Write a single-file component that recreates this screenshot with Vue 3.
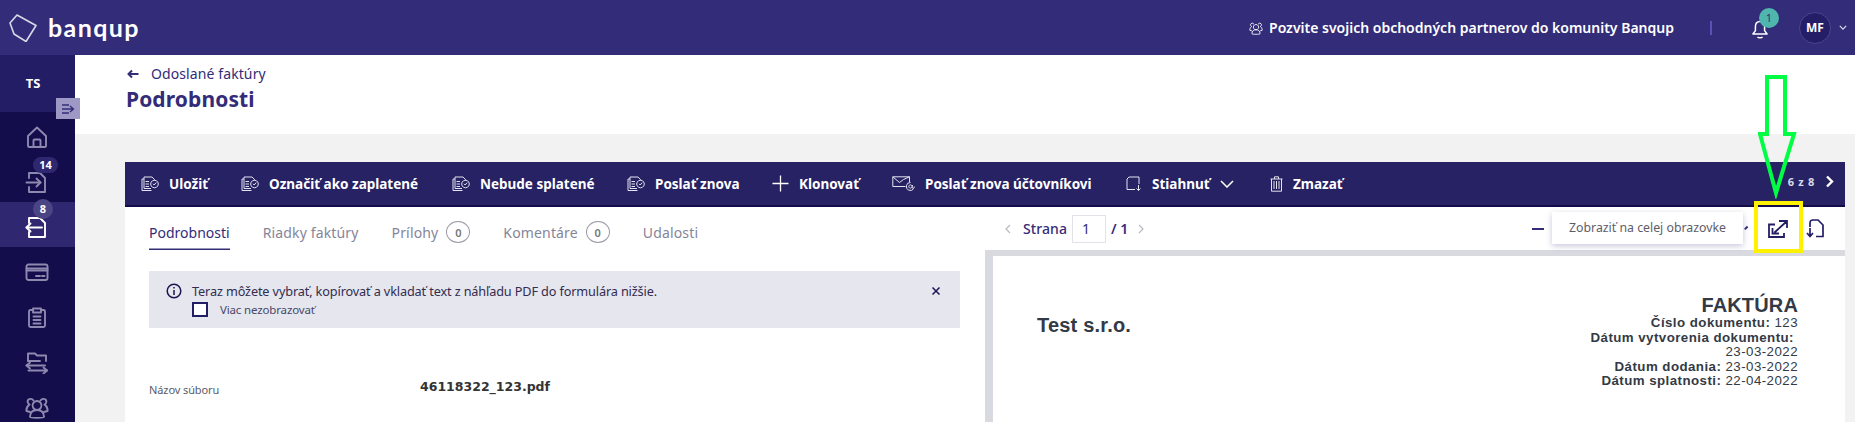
<script setup>
const docCheck = [
  'M3 3V1H11L13.5 3.5V4.5',
  'M1 3H3V12.5H10',
  'M1 3V14.5H10.5',
  'M4.5 5.5H8M4.5 8H8M4.5 10.5H8',
  'M12 7.8L13.2 9L15.2 6.5',
  'M13.5 4.2A3.8 3.8 0 1 1 13.49 4.2'
]
const sideItems = [
  { key: 'home', badge: null, paths: ['M3 21V11L12 2.5L21 11V21A1.2 1.2 0 0 1 19.8 22H4.2A1.2 1.2 0 0 1 3 21Z', 'M8.5 22V15.5A1 1 0 0 1 9.5 14.5H14.5A1 1 0 0 1 15.5 15.5V22'] },
  { key: 'in', badge: '14', paths: ['M4 8V3H15L20 8V22H4V17', 'M1.5 12.5H15.5', 'M11.5 8.5L15.5 12.5L11.5 16.5'] },
  { key: 'out', badge: '8', active: true, paths: ['M4 8V3H15L20 8V22H4V17', 'M17 12.5H1.5', 'M5.5 8.5L1.5 12.5L5.5 16.5'] },
  { key: 'card', badge: null, paths: ['M3.5 4.5H20.5A2 2 0 0 1 22.5 6.5V18A2 2 0 0 1 20.5 20H3.5A2 2 0 0 1 1.5 18V6.5A2 2 0 0 1 3.5 4.5Z', 'M1.5 8.5H22.5', 'M1.5 10.5H22.5', 'M11 16H15M17 16H19.5'] },
  { key: 'clip', badge: null, paths: ['M8 5H5.5A1.5 1.5 0 0 0 4 6.5V20.5A1.5 1.5 0 0 0 5.5 22H18.5A1.5 1.5 0 0 0 20 20.5V6.5A1.5 1.5 0 0 0 18.5 5H16', 'M8 3.5H16V7.5H8Z', 'M8.5 11.5H15.5M8.5 15H15.5M8.5 18.5H15.5'] },
  { key: 'swap', badge: null, paths: ['M3 11V3.5H10L12 5.5H21V11', 'M3 11H15', 'M1.5 15.5H20', 'M5 12.5L1.5 15.5L5 18.5', 'M3.5 20.5H22', 'M18.5 17.5L22 20.5L18.5 23.5'] },
  { key: 'people', badge: null, paths: ['M12 6A4.5 4.5 0 1 1 11.99 6', 'M5 22C5 17 8 15 12 15C16 15 19 17 19 22C19 23 5 23 5 22Z', 'M8.5 5.5A3.5 3.5 0 0 0 3.5 4.5C2 6 2.5 8.5 4.5 9.5C2.5 11 1 13 1.5 16L5 17', 'M15.5 5.5A3.5 3.5 0 0 1 20.5 4.5C22 6 21.5 8.5 19.5 9.5C21.5 11 23 13 22.5 16L19 17'] }
]
const actions = [
  { label: 'Uložiť', w: 40, icon: 18, vb: '0 0 18 15', paths: docCheck },
  { label: 'Označiť ako zaplatené', w: 151, icon: 18, vb: '0 0 18 15', paths: docCheck },
  { label: 'Nebude splatené', w: 115, icon: 18, vb: '0 0 18 15', paths: docCheck },
  { label: 'Poslať znova', w: 85, icon: 18, vb: '0 0 18 15', paths: docCheck },
  { label: 'Klonovať', w: 61, icon: 17, vb: '0 0 17 17', thick: true, paths: ['M8.5 0.5V16.5M0.5 8.5H16.5'] },
  { label: 'Poslať znova účtovníkovi', w: 169, icon: 23, vb: '0 0 23 15', paths: ['M13.5 10.5H0.8V0.8H17.5V6', 'M0.8 0.8L7.5 6.5L11.5 3.5L17.5 0.8', 'M18.5 6.5A4 4 0 1 0 21.8 12.5', 'M18.5 8.8A1.7 1.7 0 1 1 18.49 8.8M20.2 9V11.5C20.2 12.8 22.3 12.8 22.3 10.5'] },
  { label: 'Stiahnuť', w: 60, icon: 16, vb: '0 0 16 15', caret: true, paths: ['M13 8V1H3L1 3V13.5H9', 'M12.5 9V14.5M10.5 12.5L12.5 14.5L14.5 12.5'] },
  { label: 'Zmazať', w: 51, icon: 13, vb: '0 0 13 16', paths: ['M0.5 3H12.5', 'M4.5 3V0.8H8.5V3', 'M1.5 3V15.2H11.5V3', 'M4 5V13M6.5 5V13M9 5V13'] }
]
const tabs = [
  { label: 'Podrobnosti', active: true },
  { label: 'Riadky faktúry' },
  { label: 'Prílohy', count: 0 },
  { label: 'Komentáre', count: 0 },
  { label: 'Udalosti' }
]
const docLines = [
  { b: 'Číslo dokumentu:', v: ' 123' },
  { b: 'Dátum vytvorenia dokumentu:', v: '', pad: true },
  { b: '', v: '23-03-2022' },
  { b: 'Dátum dodania:', v: ' 23-03-2022' },
  { b: 'Dátum splatnosti:', v: ' 22-04-2022' }
]
</script>

<template>
  <div class="app">
    <header class="top">
      <div class="brand">
        <svg class="logo" viewBox="0 0 28 28" fill="none"><path d="M8 1L27 11.5L17 27.5L5 20L1 9Z" /></svg>
        <span class="word">banqup</span>
      </div>
      <div class="invite">
        <svg class="inv-ico" viewBox="0 0 24 24" fill="none"><path d="M12 6A4.5 4.5 0 1 1 11.99 6M5 22C5 17 8 15 12 15C16 15 19 17 19 22C19 23 5 23 5 22ZM8.5 5.5A3.5 3.5 0 0 0 3.5 4.5C2 6 2.5 8.5 4.5 9.5C2.5 11 1 13 1.5 16L5 17M15.5 5.5A3.5 3.5 0 0 1 20.5 4.5C22 6 21.5 8.5 19.5 9.5C21.5 11 23 13 22.5 16L19 17" /></svg>
        <span>Pozvite svojich obchodných partnerov do komunity Banqup</span>
      </div>
      <i class="sep"></i>
      <div class="bell">
        <svg viewBox="0 0 24 24" fill="none"><path d="M12 3C8 3 6.5 6 6.5 9.5V14L3.5 18H20.5L17.5 14V9.5C17.5 6 16 3 12 3ZM9 21.5C10 23 14 23 15 21.5" /></svg>
        <b class="bell-badge">1</b>
      </div>
      <div class="avatar">MF</div>
      <svg class="av-caret" viewBox="0 0 10 6" fill="none"><path d="M1 1L5 5L9 1" /></svg>
    </header>

    <div class="body">
      <aside class="side">
        <div class="org">TS</div>
        <button class="collapse">
          <svg viewBox="0 0 14 14" fill="none"><path d="M1 3H8M1 7H12M1 11H8M9 4L12.5 7L9 10" /></svg>
        </button>
        <div v-for="it in sideItems" :key="it.key" class="side-item" :class="{ on: it.active }">
          <svg class="side-ico" viewBox="0 0 24 24" fill="none"><path v-for="d in it.paths" :key="d" :d="d" /></svg>
          <b v-if="it.badge" class="side-badge">{{ it.badge }}</b>
        </div>
      </aside>

      <main class="main">
        <section class="title">
          <div class="back">
            <svg viewBox="0 0 12 10" fill="none"><path d="M11.5 5H1.5M5 1.5L1.5 5L5 8.5" /></svg>
            <span>Odoslané faktúry</span>
          </div>
          <h1>Podrobnosti</h1>
        </section>

        <section class="stage">
          <div class="toolbar">
            <div v-for="a in actions" :key="a.label" class="act" :class="{ 'has-caret': a.caret }">
              <svg class="act-ico" :class="{ thick: a.thick }" :style="{ width: a.icon + 'px' }" :viewBox="a.vb" fill="none"><path v-for="d in a.paths" :key="d" :d="d" /></svg>
              <span class="act-label" :style="{ width: a.w + 'px' }">{{ a.label }}</span>
              <svg v-if="a.caret" class="act-caret" viewBox="0 0 14 8" fill="none"><path d="M1 1L7 7L13 1" /></svg>
            </div>
            <div class="count">
              <span>6 z 8</span>
              <svg viewBox="0 0 9 13" fill="none"><path d="M2 1.5L7 6.5L2 11.5" /></svg>
            </div>
          </div>

          <div class="panels">
            <div class="left">
              <nav class="tabs">
                <div v-for="t in tabs" :key="t.label" class="tab" :class="{ on: t.active }">
                  <span>{{ t.label }}</span>
                  <em v-if="t.count !== undefined" class="tab-count">{{ t.count }}</em>
                </div>
              </nav>
              <div class="alert">
                <svg class="info" viewBox="0 0 16 16" fill="none"><circle cx="8" cy="8" r="6.8" /><path d="M8 7V12M8 4V5.4" /></svg>
                <div class="alert-body">
                  <p>Teraz môžete vybrať, kopírovať a vkladať text z náhľadu PDF do formulára nižšie.</p>
                  <label><i class="check"></i><span>Viac nezobrazovať</span></label>
                </div>
                <svg class="close" viewBox="0 0 10 10" fill="none"><path d="M1.5 1.5L8.5 8.5M8.5 1.5L1.5 8.5" /></svg>
              </div>
              <div class="field">
                <span class="f-label">Názov súboru</span>
                <span class="f-value">46118322_123.pdf</span>
              </div>
            </div>

            <div class="right">
              <div class="pager">
                <svg class="pg-arrow" viewBox="0 0 8 12" fill="none"><path d="M6 2L2 6L6 10" /></svg>
                <span class="pg-word">Strana</span>
                <span class="pg-input">1</span>
                <span class="pg-total">/ 1</span>
                <svg class="pg-arrow" viewBox="0 0 8 12" fill="none"><path d="M2 2L6 6L2 10" /></svg>
                <span class="spacer"></span>
                <i class="minus"></i>
                <svg class="ext" viewBox="0 0 20 18" fill="none"><path d="M7 4.5H1V17H16V13M4.5 8V13.5H11M6.5 12.5L18.5 1.5M11 1H19V8" /></svg>
                <svg class="rot" viewBox="0 0 18 19" fill="none"><path d="M4 8V4Q4 1 7 1H12L17 6V17.5H10M4 9V17.5M1 14L4 17.5L7 14" /></svg>
              </div>
              <div class="sheet-wrap">
                <div class="sheet">
                  <div class="company">Test s.r.o.</div>
                  <div class="meta">
                    <div class="doc-title">FAKTÚRA</div>
                    <div v-for="(l, i) in docLines" :key="i" class="doc-line" :class="{ pad: l.pad }"><b>{{ l.b }}</b>{{ l.v }}</div>
                  </div>
                </div>
              </div>
            </div>
          </div>
        </section>
      </main>
    </div>

    <div class="tooltip">Zobraziť na celej obrazovke</div>
    <i class="mini-tick"></i>
    <i class="yellow"></i>
    <svg class="green" viewBox="0 0 40 124" fill="none"><polygon points="9,2 27,2 27,59 36,59 18,118 2,59 9,59" /></svg>
  </div>
</template>

<style>
html, body { margin: 0; background: #fff; }
</style>

<style scoped>
.app {
  position: relative;
  width: 1855px;
  height: 422px;
  overflow: hidden;
  font-family: "Noto Sans", "Liberation Sans", sans-serif;
  color: #332c78;
}
.top {
  height: 55px;
  background: #332c78;
  display: flex;
  align-items: center;
  color: #fff;
  padding-right: 8px;
  box-sizing: border-box;
}
.brand { display: flex; align-items: center; flex: 1; padding-left: 9px; }
.logo { width: 28px; height: 28px; stroke: #d9d8e6; stroke-width: 1.6; stroke-linejoin: round; margin-top: 1px; }
.word { margin-left: 11px; font-family: "Lato", sans-serif; font-size: 25px; font-weight: 700; letter-spacing: 1.4px; line-height: 1; }
.invite { display: flex; align-items: center; gap: 6px; font-size: 14px; font-weight: 600; white-space: nowrap; }
.inv-ico { width: 14px; height: 14px; stroke: #fff; stroke-width: 1.5; }
.sep { width: 2px; height: 14px; background: #5a52b8; margin-left: 36px; }
.bell { position: relative; width: 20px; height: 20px; margin-left: 38px; margin-top: 2px; }
.bell svg { width: 20px; height: 20px; stroke: #fff; stroke-width: 1.8; stroke-linejoin: round; }
.bell-badge {
  position: absolute; left: 9px; top: -11px;
  width: 20px; height: 20px; border-radius: 50%;
  background: #4fb5ad; color: #332c78;
  font-size: 11px; font-weight: 400; line-height: 20px; text-align: center;
}
.avatar {
  width: 30px; height: 30px; margin-left: 29px; border-radius: 50%;
  background: #241e66; border: 1px solid #4a4590;
  font-size: 12px; font-weight: 700; line-height: 30px; text-align: center;
}
.av-caret { width: 8px; height: 5px; margin-left: 8px; stroke: #d9d8e6; stroke-width: 1.6; }

.body { display: flex; height: 367px; }
.side { position: relative; width: 75px; flex: none; background: #140d4b; }
.org {
  height: 57px; background: #231d66; color: #fff;
  font-size: 13px; font-weight: 700; line-height: 56px; text-align: center;
  padding-right: 9px; box-sizing: border-box;
}
.collapse {
  position: absolute; left: 56px; top: 43px; z-index: 2;
  width: 24px; height: 21px; padding: 0; border: 0;
  background: #9d99c4;
  display: flex; align-items: center; justify-content: center;
}
.collapse svg { width: 14px; height: 14px; stroke: #332c78; stroke-width: 1.3; }
.side-item {
  position: relative; height: 45px; padding-top: 5px; box-sizing: border-box;
  display: flex; align-items: center; justify-content: center;
  color: #8d89af; padding-right: 2px;
}
.side-item.on { background: #2f2870; color: #fff; }
.side-ico { width: 24px; height: 24px; stroke: currentColor; stroke-width: 1.9; stroke-linejoin: round; stroke-linecap: round; }
.side-badge {
  position: absolute; left: 33px; top: 0; min-width: 25px; height: 16px;
  border-radius: 8px; background: #2f2870; color: #fff;
  font-size: 11px; font-weight: 700; line-height: 16px; text-align: center;
}
.side-item.on .side-badge { min-width: 20px; height: 20px; line-height: 20px; border-radius: 50%; top: -3px; background: #4b4585; }

.main { flex: 1; min-width: 0; background: #f2f2f2; }
.title { height: 79px; background: #fff; padding: 11px 0 0 52px; box-sizing: border-box; }
.back { display: flex; align-items: center; gap: 12px; font-size: 14px; line-height: 16px; letter-spacing: 0.1px; }
.back svg { width: 12px; height: 10px; stroke: #332c78; stroke-width: 2; }
.title h1 { margin: 4px 0 0 -1px; font-size: 21px; font-weight: 700; line-height: 26px; letter-spacing: 0.1px; }

.stage { padding: 28px 10px 0 50px; }
.toolbar {
  height: 45px; box-sizing: border-box; background: #272264; border-bottom: 2px solid #130c4a;
  display: flex; align-items: center; padding: 0 11px 0 16px; gap: 32px; color: #fff;
}
.act { display: flex; align-items: center; gap: 10px; white-space: nowrap; }
.act.has-caret { margin-right: 4px; }
.act-ico { height: auto; stroke: #e4e3ef; stroke-width: 1; flex: none; }
.act-ico.thick { stroke-width: 1.3; stroke: #fff; }
.act-label { font-size: 13.5px; font-weight: 700; }
.act-caret { width: 14px; height: 8px; stroke: #fff; stroke-width: 1.5; margin-left: -2px; }
.count { margin-left: auto; display: flex; align-items: center; gap: 10px; margin-top: -4px; font-size: 11px; font-weight: 700; letter-spacing: 0.7px; color: #d9d8e6; }
.count svg { width: 9px; height: 13px; stroke: #fff; stroke-width: 2.4; }

.panels { display: flex; background: #fff; height: 215px; }
.left { width: 860px; flex: none; padding: 0 25px 0 24px; box-sizing: border-box; overflow: hidden; }
.tabs { display: flex; gap: 33px; height: 43px; padding-top: 14px; box-sizing: border-box; font-size: 14px; color: #85859a; }
.tab { display: flex; align-items: flex-start; gap: 8px; line-height: 24px; height: 29px; letter-spacing: 0.15px; }
.tab.on { color: #332c78; box-shadow: inset 0 -1.5px 0 #332c78; letter-spacing: 0; }
.tab-count {
  width: 24px; height: 22px; border-radius: 50%; border: 1px solid #9a9aa8;
  font-size: 11px; font-style: normal; line-height: 21px; text-align: center; box-sizing: border-box; color: #777; font-weight: 600;
}
.alert {
  margin-top: 21px; width: 811px; height: 57px; box-sizing: border-box;
  background: #e5e6ee; display: flex; padding: 12px 19px 0 17px; color: #332c50;
}
.info { width: 16px; height: 16px; flex: none; stroke: #1b1650; stroke-width: 1.5; }
.alert-body { margin-left: 10px; flex: 1; }
.alert-body p { margin: 0; font-size: 12.7px; line-height: 16px; white-space: nowrap; letter-spacing: -0.13px; }
.alert-body label { display: flex; align-items: center; gap: 12px; margin-top: 3px; font-size: 11.5px; letter-spacing: -0.15px; color: #4a4668; }
.check { width: 16px; height: 15px; border: 2px solid #231d66; box-sizing: border-box; background: #fff; }
.close { width: 10px; height: 10px; margin-top: 3px; stroke: #1b1650; stroke-width: 1.5; }
.field { margin-top: 54px; display: flex; align-items: baseline; }
.f-label { width: 271px; font-size: 11px; color: #5b5b68; letter-spacing: -0.1px; }
.f-value { font-family: "DejaVu Sans", sans-serif; font-size: 12.5px; font-weight: 700; color: #333; position: relative; top: -3px; }

.right { flex: 1; min-width: 0; }
.pager { height: 43px; display: flex; align-items: center; font-size: 14px; padding: 0 21px 0 19px; color: #332c78; }
.pg-arrow { width: 8px; height: 12px; stroke: #b9b9c4; stroke-width: 1.2; flex: none; }
.pg-word { margin-left: 11px; font-weight: 500; letter-spacing: 0.1px; }
.pg-input { width: 34px; height: 28px; margin: 0 5px; border: 1px solid #e2e2e8; box-sizing: border-box; padding-left: 9px; line-height: 26px; color: #332c78; }
.pg-total { font-weight: 600; margin-right: 9px; }
.spacer { flex: 1; }
.minus { width: 12px; height: 2px; background: #332c78; margin-right: 224px; }
.ext { width: 20px; height: 18px; stroke: #231d66; stroke-width: 1.8; flex: none; }
.rot { width: 18px; height: 19px; margin-left: 18px; stroke: #231d66; stroke-width: 1.7; flex: none; }

.sheet-wrap { height: 172px; background: #d9d9e0; padding: 6px 0 0 8px; box-sizing: border-box; }
.sheet { height: 166px; background: #fff; display: flex; justify-content: space-between; padding: 0 47px 0 44px; font-family: "Liberation Sans", sans-serif; color: #333a45; }
.company { margin-top: 58px; font-size: 20px; font-weight: 700; letter-spacing: 0.2px; line-height: 22px; }
.meta { text-align: right; padding-top: 38px; }
.doc-title { font-size: 20px; font-weight: 700; line-height: 22px; letter-spacing: 0.15px; }
.doc-line { font-size: 13.3px; line-height: 14.5px; letter-spacing: 0.45px; }
.doc-line.pad { padding-right: 4px; }

.tooltip {
  position: absolute; left: 1552px; top: 212px; width: 191px; height: 32px;
  background: #fff; box-shadow: 0 2px 6px rgba(60, 55, 120, 0.28);
  font-size: 12.3px; line-height: 32px; text-align: center; color: #5d5d68; white-space: nowrap;
}
.mini-tick { position: absolute; left: 1744px; top: 227px; width: 4px; height: 1.5px; background: #332c78; transform: rotate(-45deg); }
.yellow { position: absolute; left: 1754px; top: 201px; width: 49px; height: 52px; box-sizing: border-box; border: 4.5px solid #fff200; }
.green { position: absolute; left: 1758px; top: 75px; width: 40px; height: 124px; stroke: #00ff44; stroke-width: 4; }
</style>
